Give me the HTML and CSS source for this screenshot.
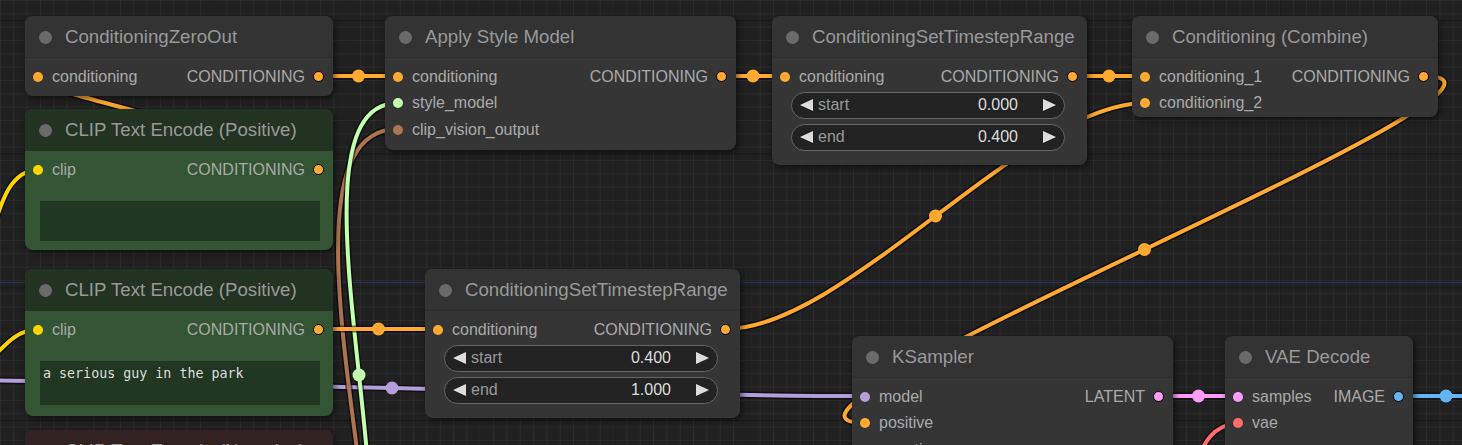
FILE: index.html
```html
<!DOCTYPE html>
<html>
<head>
<meta charset="utf-8">
<link rel="stylesheet" href="styles.css">
</head>
<body>
<div class="canvas">
  <svg class="links" width="1462" height="445" viewBox="0 0 1462 445">
    <line class="group-line" x1="0" y1="282.5" x2="1462" y2="282.5"/>
    <g class="l-clip">
      <path class="sh" d="M -8 232 C 2 200, 10 172, 38 169"/>
      <path class="ln" d="M -8 232 C 2 200, 10 172, 38 169"/>
      <path class="sh" d="M -12 362 C 5 346, 14 331, 38 329"/>
      <path class="ln" d="M -12 362 C 5 346, 14 331, 38 329"/>
    </g>
    <g class="l-model">
      <path class="sh" d="M -81 380 C 155 380, 629 396, 865 396"/>
      <path class="ln" d="M -81 380 C 155 380, 629 396, 865 396"/>
      <circle cx="392" cy="388" r="6.5"/>
    </g>
    <g class="l-vision">
      <path class="sh" d="M 320 800 C 489 800, 229 129, 398 129"/>
      <path class="ln" d="M 320 800 C 489 800, 229 129, 398 129"/>
    </g>
    <g class="l-style">
      <path class="sh" d="M 320 647 C 457 647, 261 103, 398 103"/>
      <path class="ln" d="M 320 647 C 457 647, 261 103, 398 103"/>
      <circle cx="359" cy="375" r="6.5"/>
    </g>
    <g class="l-cond">
      <path class="sh" d="M 319 169 C 393 169, -36 76, 38 76"/>
      <path class="ln" d="M 319 169 C 393 169, -36 76, 38 76"/>
      <path class="sh" d="M 319 76 L 398 76"/>
      <path class="ln" d="M 319 76 L 398 76"/>
      <circle cx="358.5" cy="76" r="6.5"/>
      <path class="sh" d="M 721 76 L 785 76"/>
      <path class="ln" d="M 721 76 L 785 76"/>
      <circle cx="753" cy="76" r="6.5"/>
      <path class="sh" d="M 1073 76 L 1145 76"/>
      <path class="ln" d="M 1073 76 L 1145 76"/>
      <circle cx="1109" cy="76" r="6.5"/>
      <path class="sh" d="M 319 329 L 438 329"/>
      <path class="ln" d="M 319 329 L 438 329"/>
      <circle cx="378.5" cy="329" r="6.5"/>
      <path class="sh" d="M 726 329 C 845 329, 1026 103, 1145 103"/>
      <path class="ln" d="M 726 329 C 845 329, 1026 103, 1145 103"/>
      <circle cx="935.5" cy="216" r="6.5"/>
      <path class="sh" d="M 1424 76 C 1588.5 76, 700.5 423, 865 423"/>
      <path class="ln" d="M 1424 76 C 1588.5 76, 700.5 423, 865 423"/>
      <circle cx="1144.5" cy="249.5" r="6.5"/>
    </g>
    <g class="l-latent">
      <path class="sh" d="M 1159 396 L 1238 396"/>
      <path class="ln" d="M 1159 396 L 1238 396"/>
      <circle cx="1198.5" cy="396" r="6.5"/>
    </g>
    <g class="l-image">
      <path class="sh" d="M 1399 396 L 1500 396"/>
      <path class="ln" d="M 1399 396 L 1500 396"/>
      <circle cx="1446" cy="396" r="6.5"/>
    </g>
    <g class="l-vae">
      <path class="sh" d="M 1192 475 C 1203 440, 1214 425, 1238 423"/>
      <path class="ln" d="M 1192 475 C 1203 440, 1214 425, 1238 423"/>
    </g>
  </svg>

  <div class="node n-zero">
    <div class="title"><span class="tdot"></span><span class="tname">ConditioningZeroOut</span></div>
    <div class="body">
      <div class="row"><span class="in"><i class="dot c-cond"></i>conditioning</span><span class="out">CONDITIONING<i class="dot o c-cond"></i></span></div>
    </div>
  </div>

  <div class="node green n-pos1">
    <div class="title"><span class="tdot"></span><span class="tname">CLIP Text Encode (Positive)</span></div>
    <div class="body">
      <div class="row"><span class="in"><i class="dot c-clip"></i>clip</span><span class="out">CONDITIONING<i class="dot o c-cond"></i></span></div>
      <div class="textarea ta1"></div>
    </div>
  </div>

  <div class="node green n-pos2">
    <div class="title"><span class="tdot"></span><span class="tname">CLIP Text Encode (Positive)</span></div>
    <div class="body">
      <div class="row"><span class="in"><i class="dot c-clip"></i>clip</span><span class="out">CONDITIONING<i class="dot o c-cond"></i></span></div>
      <div class="textarea ta2">a serious guy in the park</div>
    </div>
  </div>

  <div class="node red n-neg">
    <div class="title"><span class="tdot"></span><span class="tname">CLIP Text Encode (Negative)</span></div>
    <div class="body"></div>
  </div>

  <div class="node n-style">
    <div class="title"><span class="tdot"></span><span class="tname">Apply Style Model</span></div>
    <div class="body">
      <div class="row"><span class="in"><i class="dot c-cond"></i>conditioning</span><span class="out">CONDITIONING<i class="dot o c-cond"></i></span></div>
      <div class="row"><span class="in"><i class="dot c-style"></i>style_model</span></div>
      <div class="row"><span class="in"><i class="dot c-vision"></i>clip_vision_output</span></div>
    </div>
  </div>

  <div class="node n-tsr1">
    <div class="title"><span class="tdot"></span><span class="tname">ConditioningSetTimestepRange</span></div>
    <div class="body">
      <div class="row"><span class="in"><i class="dot c-cond"></i>conditioning</span><span class="out">CONDITIONING<i class="dot o c-cond"></i></span></div>
      <div class="widget first"><span class="arr l"></span><span class="wl">start</span><span class="wv">0.000</span><span class="arr r"></span></div>
      <div class="widget"><span class="arr l"></span><span class="wl">end</span><span class="wv">0.400</span><span class="arr r"></span></div>
    </div>
  </div>

  <div class="node n-comb">
    <div class="title"><span class="tdot"></span><span class="tname">Conditioning (Combine)</span></div>
    <div class="body">
      <div class="row"><span class="in"><i class="dot c-cond"></i>conditioning_1</span><span class="out">CONDITIONING<i class="dot o c-cond"></i></span></div>
      <div class="row"><span class="in"><i class="dot c-cond"></i>conditioning_2</span></div>
    </div>
  </div>

  <div class="node n-tsr2">
    <div class="title"><span class="tdot"></span><span class="tname">ConditioningSetTimestepRange</span></div>
    <div class="body">
      <div class="row"><span class="in"><i class="dot c-cond"></i>conditioning</span><span class="out">CONDITIONING<i class="dot o c-cond"></i></span></div>
      <div class="widget first"><span class="arr l"></span><span class="wl">start</span><span class="wv">0.400</span><span class="arr r"></span></div>
      <div class="widget"><span class="arr l"></span><span class="wl">end</span><span class="wv">1.000</span><span class="arr r"></span></div>
    </div>
  </div>

  <div class="node n-ks">
    <div class="title"><span class="tdot"></span><span class="tname">KSampler</span></div>
    <div class="body">
      <div class="row"><span class="in"><i class="dot c-model"></i>model</span><span class="out">LATENT<i class="dot o c-latent"></i></span></div>
      <div class="row"><span class="in"><i class="dot c-cond"></i>positive</span></div>
      <div class="row"><span class="in"><i class="dot c-cond"></i>negative</span></div>
    </div>
  </div>

  <div class="node n-vae">
    <div class="title"><span class="tdot"></span><span class="tname">VAE Decode</span></div>
    <div class="body">
      <div class="row"><span class="in"><i class="dot c-latent"></i>samples</span><span class="out">IMAGE<i class="dot o c-image"></i></span></div>
      <div class="row"><span class="in"><i class="dot c-vae"></i>vae</span></div>
    </div>
  </div>
</div>
</body>
</html>
```

FILE: styles.css
```css
html, body {
  margin: 0;
  padding: 0;
  background: #222;
}

.canvas {
  position: relative;
  width: 1462px;
  height: 445px;
  overflow: hidden;
  background-color: #202020;
  background-image:
    linear-gradient(to right, rgba(0,0,0,0.25) 1px, transparent 1px),
    linear-gradient(to bottom, rgba(0,0,0,0.25) 1px, transparent 1px),
    linear-gradient(to right, rgba(255,255,255,0.05) 1px, transparent 1px),
    linear-gradient(to bottom, rgba(255,255,255,0.05) 1px, transparent 1px);
  background-size: 133.33px 133.33px, 133.33px 133.33px, 13.333px 13.333px, 13.333px 13.333px;
  background-position: 80px 0, 0 20px, 0 0, 0 0;
  font-family: "Liberation Sans", Arial, sans-serif;
}

/* ---------- links ---------- */
.links {
  position: absolute;
  left: 0;
  top: 0;
}
.group-line {
  stroke: #22335f;
  stroke-width: 1;
}
.links path {
  fill: none;
  stroke-linecap: round;
}
.links .sh {
  stroke: rgba(0,0,0,0.55);
  stroke-width: 7;
}
.links .ln {
  stroke-width: 4;
}
.l-cond .ln { stroke: #ffa931; }
.l-cond circle { fill: #ffa931; }
.l-clip .ln { stroke: #ffd500; }
.l-model .ln { stroke: #b39ddb; }
.l-model circle { fill: #b39ddb; }
.l-style .ln { stroke: #c2ffae; }
.l-style circle { fill: #c2ffae; }
.l-vision .ln { stroke: #ad7452; }
.l-latent .ln { stroke: #ff9cf9; }
.l-latent circle { fill: #ff9cf9; }
.l-image .ln { stroke: #64b5f6; }
.l-image circle { fill: #64b5f6; }
.l-vae .ln { stroke: #ff6e6e; }

/* ---------- nodes ---------- */
.node {
  position: absolute;
  border-radius: 8px;
  background: #353535;
  box-shadow: 2px 2px 6px rgba(0,0,0,0.55);
  display: flex;
  flex-direction: column;
  overflow: hidden;
}
.node .title {
  height: 42px;
  flex: none;
  background: #333;
  border-bottom: 1px solid #2c2c2c;
  box-sizing: border-box;
  display: flex;
  align-items: center;
  padding: 2px 0 0 13.5px;
}
.tdot {
  width: 13px;
  height: 13px;
  border-radius: 50%;
  background: #6a6a6a;
  flex: none;
}
.tname {
  margin-left: 13.5px;
  color: #999;
  font-size: 18.67px;
  white-space: nowrap;
  line-height: 1;
}
.node .body {
  flex: 1;
  display: flex;
  flex-direction: column;
  padding: 5.2px 0 0 0;
}

.row {
  height: 26.67px;
  display: flex;
  align-items: center;
  justify-content: space-between;
  padding: 0 9px 0 8px;
  font-size: 16px;
  color: #aaa;
  white-space: nowrap;
}
.row .in, .row .out {
  display: flex;
  align-items: center;
}
.dot {
  display: block;
  width: 10px;
  height: 10px;
  border-radius: 50%;
  flex: none;
}
.in .dot { margin-right: 9px; }
.out .dot {
  margin-left: 8px;
  width: 9px;
  height: 9px;
  border: 1px solid #000;
}
.c-cond { background: #ffa931; }
.c-clip { background: #ffd500; }
.c-style { background: #c2ffae; }
.c-vision { background: #ad7452; }
.c-model { background: #b39ddb; }
.c-latent { background: #ff9cf9; }
.c-image { background: #64b5f6; }
.c-vae { background: #ff6e6e; }

/* widgets */
.widget {
  height: 27px;
  box-sizing: border-box;
  margin: 5px 22px 0 19px;
  border: 1px solid #666;
  border-radius: 14px;
  background: #222;
  display: flex;
  align-items: center;
  padding: 0 8px 0 8px;
  font-size: 16px;
}
.widget.first { margin-top: 2px; }
.arr {
  width: 0;
  height: 0;
  border-top: 6px solid transparent;
  border-bottom: 6px solid transparent;
  flex: none;
}
.arr.l { border-right: 13px solid #ddd; }
.arr.r { border-left: 13px solid #ddd; }
.wl {
  color: #999;
  margin-left: 5px;
}
.wv {
  flex: 1;
  text-align: right;
  color: #ddd;
  margin-right: 25px;
}

/* textarea */
.textarea {
  margin: 18px 13px 0 15px;
  background: rgba(0,0,0,0.35);
  color: #ddd;
  font-family: "DejaVu Sans Mono", "Liberation Mono", monospace;
  font-size: 13.33px;
  line-height: 1.2;
  padding: 5px 3px;
  box-sizing: border-box;
  white-space: pre;
}
.ta1 { height: 40px; }
.ta2 { height: 44px; }

/* color variants */
.node.green { background: #335533; }
.node.green .title { background: #223322; border-bottom-color: #223322; }
.node.red { background: #553333; }
.node.red .title { background: #332222; border-bottom-color: #332222; }

/* placement on canvas */
.n-zero  { left: 25px;   top: 16px;  width: 308px; height: 80px; }
.n-pos1  { left: 25px;   top: 109px; width: 308px; height: 141px; }
.n-pos2  { left: 25px;   top: 269px; width: 308px; height: 147px; }
.n-neg   { left: 25px;   top: 430px; width: 308px; height: 140px; }
.n-style { left: 385px;  top: 16px;  width: 351px; height: 134px; }
.n-tsr1  { left: 772px;  top: 16px;  width: 315px; height: 149px; }
.n-comb  { left: 1132px; top: 16px;  width: 306px; height: 101px; }
.n-tsr2  { left: 425px;  top: 269px; width: 315px; height: 149px; }
.n-ks    { left: 852px;  top: 336px; width: 321px; height: 220px; }
.n-vae   { left: 1225px; top: 336px; width: 188px; height: 120px; }
```
